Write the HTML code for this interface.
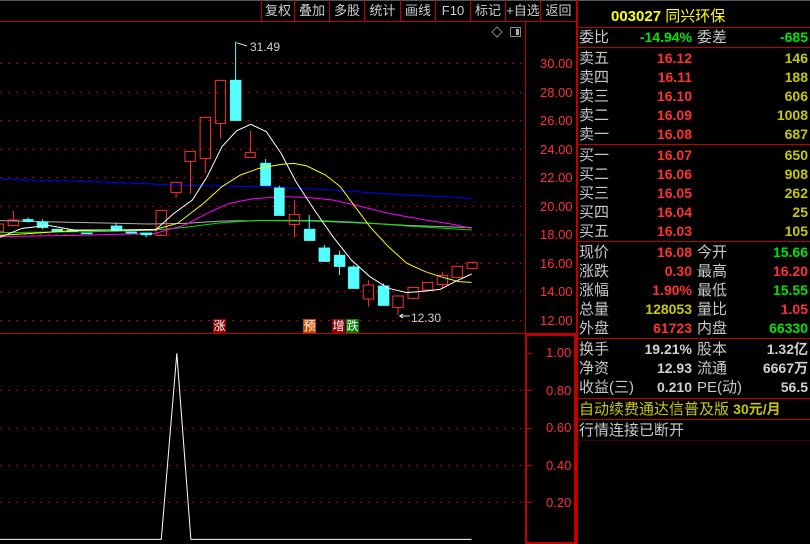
<!DOCTYPE html>
<html><head><meta charset="utf-8">
<style>
*{margin:0;padding:0;box-sizing:border-box}
body{width:810px;height:544px;background:#000;overflow:hidden;position:relative;font-family:"Liberation Sans","WenQuanYi Zen Hei","Noto Sans CJK SC",sans-serif}
.a{position:absolute;white-space:nowrap}
.tb{position:absolute;top:0;height:21px;line-height:21px;font-size:13px;color:#d0d0d0;text-align:center;border-left:1px solid #c00000}
.l{position:absolute;left:579px;font-size:15px;color:#c8c8c8;line-height:19px}
.l2{position:absolute;left:697px;font-size:15px;color:#c8c8c8;line-height:19px}
.v{position:absolute;font-size:14px;font-weight:bold;line-height:19px;text-align:right}
.v1{right:118px}.v2{right:2px}
.r{color:#ff3232}.g{color:#00e600}.y{color:#c8c800}.w{color:#d0d0d0}
.hl{position:absolute;left:577px;width:233px;height:1px;background:#c00000}
.px{position:absolute;left:540px;font-size:13px;color:#ff3232}
.mk{position:absolute;top:319px;width:13px;height:14px;font-size:12px;line-height:14px;color:#fff;text-align:center}
</style></head><body>
<div class="a" style="left:0;top:0;width:810px;height:1px;background:#555"></div>
<!-- toolbar -->
<div class="tb" style="left:261px;width:33px">复权</div>
<div class="tb" style="left:294px;width:35px">叠加</div>
<div class="tb" style="left:329px;width:35px">多股</div>
<div class="tb" style="left:364px;width:36px">统计</div>
<div class="tb" style="left:400px;width:35px">画线</div>
<div class="tb" style="left:435px;width:35px">F10</div>
<div class="tb" style="left:470px;width:35px">标记</div>
<div class="tb" style="left:505px;width:35px">+自选</div>
<div class="tb" style="left:540px;width:36px">返回</div>
<div class="a" style="left:0;top:21px;width:577px;height:1px;background:#c00000"></div>
<!-- axes lines -->
<div class="a" style="left:525px;top:21px;width:1px;height:313px;background:#c00000"></div>
<div class="a" style="left:576px;top:0;width:2px;height:544px;background:#c00000"></div>
<div class="a" style="left:0;top:333px;width:577px;height:1px;background:#c00000"></div>
<div class="a" style="left:525px;top:334px;width:51px;height:210px;border:2px solid #c00000"></div>
<!-- icons -->
<svg class="a" style="left:490px;top:25px" width="40" height="16"><path d="M7 2 L12 7 L7 12 L2 7 Z" fill="none" stroke="#888"/><rect x="20.5" y="2.5" width="10" height="9" fill="none" stroke="#888"/><rect x="26" y="4" width="3" height="6" fill="#aaa"/></svg>
<!-- main chart -->
<svg class="a" style="left:0;top:0" width="580" height="340" viewBox="0 0 1568 1020" preserveAspectRatio="none">
<g stroke="#c00000" stroke-dasharray="2 6" vector-effect="non-scaling-stroke">
<line x1="0" x2="1420" y1="190" y2="190" vector-effect="non-scaling-stroke"/><line x1="0" x2="1420" y1="277" y2="277" vector-effect="non-scaling-stroke"/><line x1="0" x2="1420" y1="362" y2="362" vector-effect="non-scaling-stroke"/><line x1="0" x2="1420" y1="448" y2="448" vector-effect="non-scaling-stroke"/><line x1="0" x2="1420" y1="533" y2="533" vector-effect="non-scaling-stroke"/><line x1="0" x2="1420" y1="619" y2="619" vector-effect="non-scaling-stroke"/><line x1="0" x2="1420" y1="704" y2="704" vector-effect="non-scaling-stroke"/><line x1="0" x2="1420" y1="790" y2="790" vector-effect="non-scaling-stroke"/><line x1="0" x2="1420" y1="875" y2="875" vector-effect="non-scaling-stroke"/><line x1="0" x2="1420" y1="962" y2="962" vector-effect="non-scaling-stroke"/>
</g>
<g fill="none" stroke-width="1" vector-effect="non-scaling-stroke">
<polyline vector-effect="non-scaling-stroke" stroke="#0000ff" points="0,538 130,541 300,547 500,556 700,560 900,570 1000,578 1100,585 1200,590 1275,596"/>
<polyline vector-effect="non-scaling-stroke" stroke="#b0b0b0" points="0,662 200,667 400,672 500,670 600,663 700,662 850,663 1000,670 1100,676 1275,683"/>
<polyline vector-effect="non-scaling-stroke" stroke="#00e000" points="0,698 300,694 420,690 500,682 600,668 700,661 850,661 975,667 1100,678 1275,690"/>
<polyline vector-effect="non-scaling-stroke" stroke="#ff00ff" points="0,710 250,705 420,700 500,675 560,640 620,610 680,597 760,590 830,592 900,600 960,615 1050,640 1150,660 1220,672 1275,685"/>
</g>
<g fill="#55ffff" stroke="#55ffff">
<path vector-effect="non-scaling-stroke" d="M76 652V668M115 658V688M314 668V694M395 698V712M637 125V240M718 477V489M755 557V563M836 645V687M877 735V743M918 752V825M956 795V800M1037 850V857"/>
<rect x="62" y="658" width="28" height="7"/><rect x="100" y="665" width="30" height="18"/><rect x="140" y="687" width="30" height="8"/><rect x="180" y="690" width="30" height="5"/><rect x="220" y="698" width="30" height="4"/><rect x="300" y="677" width="30" height="15"/><rect x="340" y="695" width="30" height="5"/><rect x="380" y="698" width="30" height="7"/>
<rect x="622" y="240" width="30" height="122"/><rect x="704" y="489" width="28" height="68"/><rect x="741" y="563" width="28" height="84"/><rect x="822" y="687" width="30" height="35"/><rect x="862" y="743" width="30" height="42"/><rect x="903" y="765" width="30" height="35"/><rect x="941" y="800" width="30" height="66"/><rect x="1022" y="857" width="30" height="60"/>
</g>
<g fill="none" stroke="#ff3030" stroke-width="1">
<g vector-effect="non-scaling-stroke">
<path vector-effect="non-scaling-stroke" d="M36 633V660M476 577V595M515 484V580M555 475V520M596 370V415M677 393V457M796 600V643M796 673V712M996 840V855M996 897V920M1076 922V945M1156 870V875M1196 815V826M1196 853V862"/>
<rect vector-effect="non-scaling-stroke" x="-5" y="672" width="15" height="23"/><rect vector-effect="non-scaling-stroke" x="22" y="660" width="28" height="17"/><rect vector-effect="non-scaling-stroke" x="422" y="631" width="28" height="75"/><rect vector-effect="non-scaling-stroke" x="462" y="547" width="28" height="30"/><rect vector-effect="non-scaling-stroke" x="500" y="454" width="28" height="30"/><rect vector-effect="non-scaling-stroke" x="541" y="352" width="28" height="123"/><rect vector-effect="non-scaling-stroke" x="582" y="241" width="28" height="129"/><rect vector-effect="non-scaling-stroke" x="663" y="457" width="27" height="15"/><rect vector-effect="non-scaling-stroke" x="782" y="643" width="28" height="30"/><rect vector-effect="non-scaling-stroke" x="982" y="855" width="28" height="42"/><rect vector-effect="non-scaling-stroke" x="1062" y="888" width="28" height="34"/><rect vector-effect="non-scaling-stroke" x="1103" y="862" width="29" height="33"/><rect vector-effect="non-scaling-stroke" x="1142" y="847" width="28" height="23"/><rect vector-effect="non-scaling-stroke" x="1182" y="826" width="28" height="27"/><rect vector-effect="non-scaling-stroke" x="1222" y="799" width="28" height="33"/><rect vector-effect="non-scaling-stroke" x="1263" y="787" width="27" height="18"/>
</g></g>
<g fill="none">
<polyline vector-effect="non-scaling-stroke" stroke="#ffff00" points="0,706 200,692 420,688 480,670 550,610 600,560 650,525 700,505 760,493 795,490 830,498 880,525 920,560 960,620 1000,680 1050,740 1100,790 1150,815 1200,833 1240,845 1275,847"/>
<polyline vector-effect="non-scaling-stroke" stroke="#ffffff" points="0,712 60,685 130,676 200,690 420,690 470,640 520,600 560,530 600,440 640,392 678,373 720,395 760,460 800,545 850,630 900,710 950,780 1000,830 1050,865 1100,878 1150,873 1190,868 1230,845 1275,822"/>
<path vector-effect="non-scaling-stroke" stroke="#ddd" d="M640 128L668 138M1080 948L1108 948M1080 948L1090 942M1080 948L1090 954"/>
</g>
</svg>
<div class="a" style="left:250px;top:40px;font-size:12px;color:#d0d0d0">31.49</div>
<div class="a" style="left:411px;top:311px;font-size:12px;color:#d0d0d0">12.30</div>
<div class="px" style="top:56px">30.00</div><div class="px" style="top:85px">28.00</div><div class="px" style="top:113px">26.00</div><div class="px" style="top:142px">24.00</div><div class="px" style="top:170px">22.00</div><div class="px" style="top:199px">20.00</div><div class="px" style="top:227px">18.00</div><div class="px" style="top:256px">16.00</div><div class="px" style="top:284px">14.00</div><div class="px" style="top:313px">12.00</div>
<div class="mk" style="left:213px;background:#900000">涨</div>
<div class="mk" style="left:303px;background:#c05000">预</div>
<div class="mk" style="left:332px;background:#900000">增</div>
<div class="mk" style="left:346px;background:#008000">跌</div>
<!-- lower chart -->
<svg class="a" style="left:0;top:320px" width="580" height="224" viewBox="0 0 1568 672" preserveAspectRatio="none">
<g stroke="#c00000" stroke-dasharray="2 6"><line vector-effect="non-scaling-stroke" x1="0" x2="1420" y1="211" y2="211"/><line vector-effect="non-scaling-stroke" x1="0" x2="1420" y1="325" y2="325"/><line vector-effect="non-scaling-stroke" x1="0" x2="1420" y1="436" y2="436"/><line vector-effect="non-scaling-stroke" x1="0" x2="1420" y1="547" y2="547"/></g>
<polyline vector-effect="non-scaling-stroke" fill="none" stroke="#fff" points="0,658 436,658 478,100 516,658 1275,658"/>
<path vector-effect="non-scaling-stroke" stroke="#c00000" d="M1422 100H1440M1422 211H1440M1422 325H1440M1422 436H1440M1422 547H1440"/>
</svg>
<div class="px" style="left:546px;top:345px">1.00</div><div class="px" style="left:546px;top:383px">0.80</div><div class="px" style="left:546px;top:420px">0.60</div><div class="px" style="left:546px;top:458px">0.40</div><div class="px" style="left:546px;top:495px">0.20</div>
<!-- right panel -->
<div class="a" style="left:611px;top:5px;font-size:15px;color:#ffff00;font-weight:bold">003027 <span style="font-weight:normal">同兴环保</span></div>
<div class="hl" style="top:27px"></div>
<div class="l" style="top:28px">委比</div><div class="v v1 g" style="top:28px">-14.94%</div><div class="l2" style="top:28px">委差</div><div class="v v2 g" style="top:28px">-685</div>
<div class="hl" style="top:47px"></div>
<div class="l" style="top:49px">卖五</div><div class="v v1 r" style="top:49px">16.12</div><div class="v v2 y" style="top:49px">146</div>
<div class="l" style="top:68px">卖四</div><div class="v v1 r" style="top:68px">16.11</div><div class="v v2 y" style="top:68px">188</div>
<div class="l" style="top:87px">卖三</div><div class="v v1 r" style="top:87px">16.10</div><div class="v v2 y" style="top:87px">606</div>
<div class="l" style="top:106px">卖二</div><div class="v v1 r" style="top:106px">16.09</div><div class="v v2 y" style="top:106px">1008</div>
<div class="l" style="top:125px">卖一</div><div class="v v1 r" style="top:125px">16.08</div><div class="v v2 y" style="top:125px">687</div>
<div class="hl" style="top:144px"></div>
<div class="l" style="top:146px">买一</div><div class="v v1 r" style="top:146px">16.07</div><div class="v v2 y" style="top:146px">650</div>
<div class="l" style="top:165px">买二</div><div class="v v1 r" style="top:165px">16.06</div><div class="v v2 y" style="top:165px">908</div>
<div class="l" style="top:184px">买三</div><div class="v v1 r" style="top:184px">16.05</div><div class="v v2 y" style="top:184px">262</div>
<div class="l" style="top:203px">买四</div><div class="v v1 r" style="top:203px">16.04</div><div class="v v2 y" style="top:203px">25</div>
<div class="l" style="top:222px">买五</div><div class="v v1 r" style="top:222px">16.03</div><div class="v v2 y" style="top:222px">105</div>
<div class="hl" style="top:241px"></div>
<div class="l" style="top:243px">现价</div><div class="v v1 r" style="top:243px">16.08</div><div class="l2" style="top:243px">今开</div><div class="v v2 g" style="top:243px">15.66</div>
<div class="l" style="top:262px">涨跌</div><div class="v v1 r" style="top:262px">0.30</div><div class="l2" style="top:262px">最高</div><div class="v v2 r" style="top:262px">16.20</div>
<div class="l" style="top:281px">涨幅</div><div class="v v1 r" style="top:281px">1.90%</div><div class="l2" style="top:281px">最低</div><div class="v v2 g" style="top:281px">15.55</div>
<div class="l" style="top:300px">总量</div><div class="v v1 y" style="top:300px">128053</div><div class="l2" style="top:300px">量比</div><div class="v v2 r" style="top:300px">1.05</div>
<div class="l" style="top:319px">外盘</div><div class="v v1 r" style="top:319px">61723</div><div class="l2" style="top:319px">内盘</div><div class="v v2 g" style="top:319px">66330</div>
<div class="hl" style="top:338px"></div>
<div class="l" style="top:340px">换手</div><div class="v v1 w" style="top:340px">19.21%</div><div class="l2" style="top:340px">股本</div><div class="v v2 w" style="top:340px">1.32亿</div>
<div class="l" style="top:359px">净资</div><div class="v v1 w" style="top:359px">12.93</div><div class="l2" style="top:359px">流通</div><div class="v v2 w" style="top:359px">6667万</div>
<div class="l" style="top:378px">收益(三)</div><div class="v v1 w" style="top:378px">0.210</div><div class="l2" style="top:378px">PE(动)</div><div class="v v2 w" style="top:378px">56.5</div>
<div class="hl" style="top:398px"></div>
<div class="l y" style="top:400px;color:#c8c800">自动续费通达信普及版 <b style="font-size:14px">30元/月</b></div>
<div class="hl" style="top:419px"></div>
<div class="l" style="top:421px">行情连接已断开</div>
<div class="hl" style="top:440px;background:#400000"></div>
</body></html>
